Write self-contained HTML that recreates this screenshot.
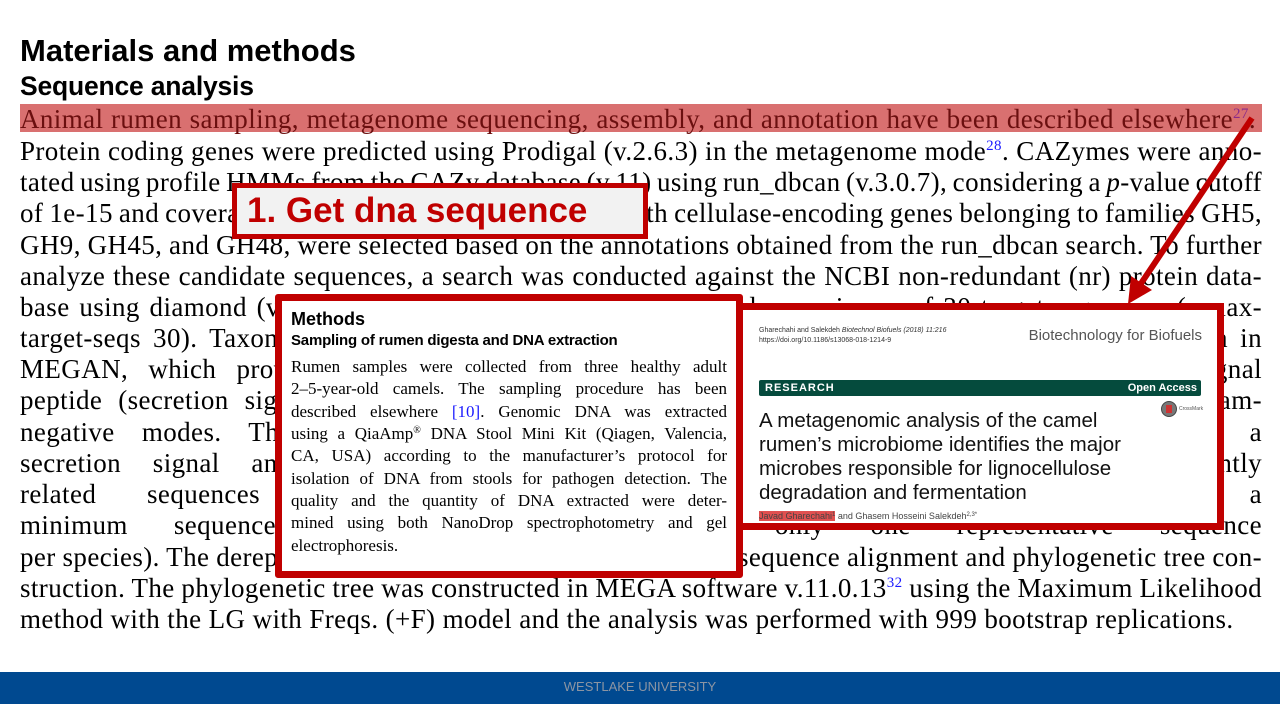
<!DOCTYPE html>
<html><head><meta charset="utf-8"><style>
body{margin:0;width:1280px;height:720px;background:#fff;position:relative;overflow:hidden;font-family:"Liberation Serif",serif;}
.h1{position:absolute;left:20px;top:33px;font:bold 31px "Liberation Sans",sans-serif;color:#000;letter-spacing:0px}
.h2{position:absolute;left:20px;top:71px;font:bold 26.5px "Liberation Sans",sans-serif;color:#000;letter-spacing:-0.2px}
.l{position:absolute;left:20px;width:1242px;font-size:27px;letter-spacing:0.4px;word-spacing:-2px;line-height:30px;color:#000;text-align:justify;text-align-last:justify;white-space:nowrap;overflow:hidden}
.l.n{text-align-last:left;word-spacing:0}
sup{font-size:15px;color:#1a1aff;line-height:0;vertical-align:10px}
.hl{position:absolute;left:20px;top:104px;width:1242px;height:28px;background:#d97070}
.box1{position:absolute;left:232px;top:183px;width:396px;height:46px;border:5px solid #c00000;background:#f2f2f2;color:#c00000;font:bold 35px "Liberation Sans",sans-serif;line-height:46px;padding-left:10px;box-sizing:content-box}
.pl{position:absolute;left:275px;top:294px;width:454px;height:270px;border:7px solid #c00000;background:#fff;border-radius:3px}
.pl .t{position:absolute;left:9px;width:436px;font-size:17px;line-height:22.3px;text-align:justify;text-align-last:justify;white-space:nowrap}
.pr{position:absolute;left:736px;top:303px;width:474px;height:213px;border:7px solid #c00000;background:#fff;font-family:"Liberation Sans",sans-serif}
.foot{position:absolute;left:0;top:672px;width:1280px;height:32px;background:#004990;color:#8c95a3;font:13px "Liberation Sans",sans-serif;text-align:center;line-height:30px}
</style></head><body>
<div class="h1">Materials and methods</div>
<div class="h2">Sequence analysis</div>
<div class="hl"></div>
<div class="l" style="top:104px;color:#6b0f0f;width:1236px">Animal rumen sampling, metagenome sequencing, assembly, and annotation have been described elsewhere<sup style="color:#8a2a8a">27</sup>.</div>
<div class="l" style="top:136px">Protein coding genes were predicted using Prodigal (v.2.6.3) in the metagenome mode<sup>28</sup>. CAZymes were anno-</div>
<div class="l" style="top:167px">tated using profile HMMs from the CAZy database (v.11) using run_dbcan (v.3.0.7), considering a <i>p</i>-value cutoff</div>
<div class="l" style="top:198px">of 1e-15 and coverage of 0.35. The predicted proteins with cellulase-encoding genes belonging to families GH5,</div>
<div class="l" style="top:230px">GH9, GH45, and GH48, were selected based on the annotations obtained from the run_dbcan search. To further</div>
<div class="l" style="top:261px">analyze these candidate sequences, a search was conducted against the NCBI non-redundant (nr) protein data-</div>
<div class="l" style="top:292px">base using diamond (v.2.0.9) with an e-value cutoff of 1e-5 and a maximum of 30 target sequences (--max-</div>
<div class="l" style="top:323px">target-seqs 30). Taxonomic assignment of the sequences was then performed using the LCA algorithm in</div>
<div class="l" style="top:354px">MEGAN, which provides taxonomic information for each of the candidate sequences. The signal</div>
<div class="l" style="top:385px">peptide (secretion signal) of each sequence was predicted using SignalP in Gram-positive and Gram-</div>
<div class="l" style="top:417px">negative modes. The candidate sequences were then filtered, and those which contained a</div>
<div class="l" style="top:448px">secretion signal and originated from bacteria were retained. Next, closely and distantly</div>
<div class="l" style="top:479px">related sequences to the candidates were clustered using CD-HIT with a</div>
<div class="l" style="top:510px">minimum sequence identity of 90% (retaining only one representative sequence</div>
<div class="l" style="top:542px">per species). The dereplicated sequences were used for multiple sequence alignment and phylogenetic tree con-</div>
<div class="l" style="top:573px">struction. The phylogenetic tree was constructed in MEGA software v.11.0.13<sup>32</sup> using the Maximum Likelihood</div>
<div class="l n" style="top:604px">method with the LG with Freqs. (+F) model and the analysis was performed with 999 bootstrap replications.</div>

<svg style="position:absolute;left:0;top:0" width="1280" height="720"><line x1="1252" y1="118" x2="1140" y2="285" stroke="#c00000" stroke-width="6"/><polygon points="1128,304 1131,276 1152,290" fill="#c00000"/></svg>

<div class="box1">1. Get dna sequence</div>

<div class="pl">
<div style="position:absolute;left:9px;top:8px;font:bold 18px 'Liberation Sans',sans-serif">Methods</div>
<div style="position:absolute;left:9px;top:31px;font:bold 15px 'Liberation Sans',sans-serif;letter-spacing:-0.2px">Sampling of rumen digesta and DNA extraction</div>
<div class="t" style="top:55px">Rumen samples were collected from three healthy adult</div>
<div class="t" style="top:77px">2–5-year-old camels. The sampling procedure has been</div>
<div class="t" style="top:100px">described elsewhere <span style="color:#1a1aff">[10]</span>. Genomic DNA was extracted</div>
<div class="t" style="top:122px">using a QiaAmp<sup style="color:#000;font-size:10px;vertical-align:6px">®</sup> DNA Stool Mini Kit (Qiagen, Valencia,</div>
<div class="t" style="top:144px">CA, USA) according to the manufacturer’s protocol for</div>
<div class="t" style="top:167px">isolation of DNA from stools for pathogen detection. The</div>
<div class="t" style="top:189px">quality and the quantity of DNA extracted were deter-</div>
<div class="t" style="top:211px">mined using both NanoDrop spectrophotometry and gel</div>
<div class="t" style="top:234px;text-align-last:left">electrophoresis.</div>
</div>

<div class="pr">
<div style="position:absolute;left:16px;top:16px;font-size:7px;line-height:10px;color:#333">Gharechahi and Salekdeh <i>Biotechnol Biofuels (2018) 11:216</i><br>https://doi.org/10.1186/s13068-018-1214-9</div>
<div style="position:absolute;right:15px;top:17px;font-size:15px;color:#555">Biotechnology for Biofuels</div>
<div style="position:absolute;left:16px;top:70px;width:442px;height:16px;background:#054b3d;border-radius:2px;color:#fff;font-size:11px;font-weight:bold;line-height:16px"><span style="margin-left:6px;letter-spacing:1px">RESEARCH</span><span style="float:right;margin-right:4px">Open Access</span></div>
<div style="position:absolute;left:418px;top:91px;width:14px;height:14px;border-radius:50%;background:#777;border:1px solid #444"><div style="margin:3px 4px;width:6px;height:8px;background:#c33"></div></div>
<div style="position:absolute;left:436px;top:96px;font-size:5px;color:#555">CrossMark</div>
<div style="position:absolute;left:16px;top:99px;font-size:20.5px;line-height:24px;color:#111">A metagenomic analysis of the camel<br>rumen’s microbiome identifies the major<br>microbes responsible for lignocellulose<br>degradation and fermentation</div>
<div style="position:absolute;left:16px;top:201px;font-size:9px;color:#444"><span style="background:#e05050">Javad Gharechahi<sup style="color:#444;font-size:6px;vertical-align:3px">1</sup></span> and Ghasem Hosseini Salekdeh<sup style="color:#444;font-size:6px;vertical-align:3px">2,3*</sup></div>
</div>

<div class="foot">WESTLAKE UNIVERSITY</div>
</body></html>
